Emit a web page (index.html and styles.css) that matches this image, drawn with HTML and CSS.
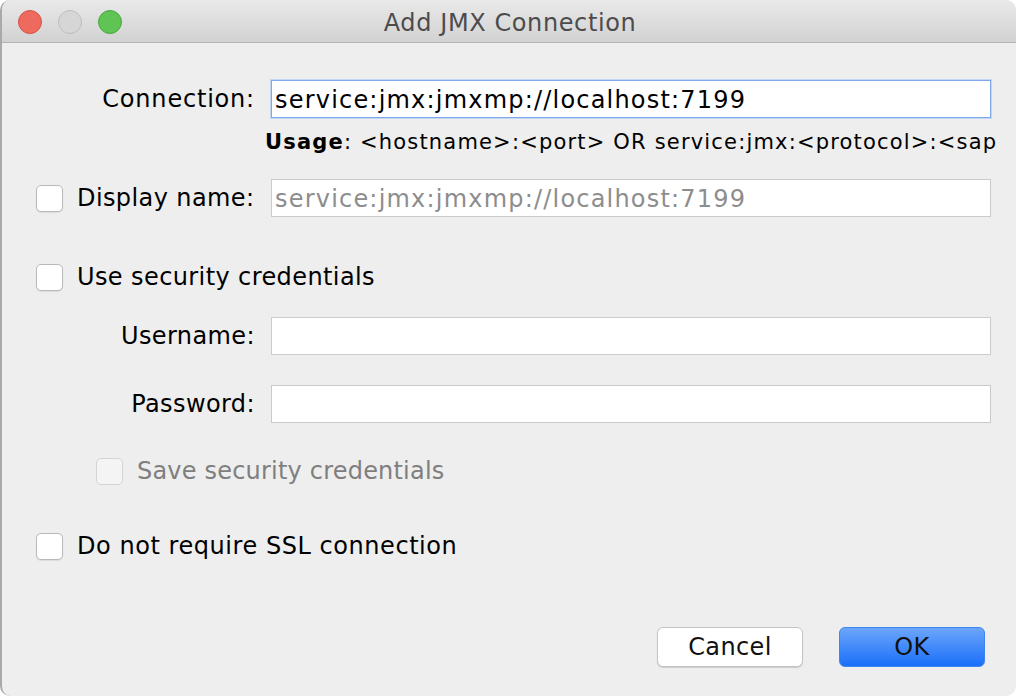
FILE: index.html
```
<!DOCTYPE html>
<html>
<head>
<meta charset="utf-8">
<link rel="stylesheet" href="styles.css">
</head>
<body>
<div class="window">
  <div class="titlebar">
    <div class="lights">
      <span class="light red"></span>
      <span class="light gray"></span>
      <span class="light green"></span>
    </div>
    <div class="title">Add JMX Connection</div>
  </div>
  <div class="content">
    <div class="row row-conn">
      <div class="label wide">Connection:</div>
      <div class="field focus">service:jmx:jmxmp://localhost:7199</div>
    </div>
    <div class="usage"><b>Usage</b>: &lt;hostname&gt;:&lt;port&gt; OR service:jmx:&lt;protocol&gt;:&lt;sap</div>
    <div class="row row-display">
      <div class="check-label"><span class="box"></span><span>Display name:</span></div>
      <div class="field placeholder">service:jmx:jmxmp://localhost:7199</div>
    </div>
    <div class="check-line row-sec"><span class="box"></span><span>Use security credentials</span></div>
    <div class="row row-user">
      <div class="label">Username:</div>
      <div class="field"></div>
    </div>
    <div class="row row-pass">
      <div class="label">Password:</div>
      <div class="field"></div>
    </div>
    <div class="check-line row-save disabled"><span class="box"></span><span class="save-text">Save security credentials</span></div>
    <div class="check-line row-ssl"><span class="box"></span><span class="ssl-text">Do not require SSL connection</span></div>
    <div class="buttons">
      <button class="btn cancel">Cancel</button>
      <button class="btn ok">OK</button>
    </div>
  </div>
</div>
</body>
</html>
```
FILE: styles.css
```
html, body {
  margin: 0;
  padding: 0;
  background: #ffffff;
}
body {
  width: 1018px;
  height: 698px;
  overflow: hidden;
  font-family: "DejaVu Sans", "Liberation Sans", sans-serif;
  color: #000;
}
.window {
  width: 1014px;
  height: 696px;
  background: #eeeeee;
  border-left: 2px solid #a9a9a9;
  border-radius: 10px;
  overflow: hidden;
  position: relative;
}
.titlebar {
  height: 43px;
  background: linear-gradient(#e9e9e9, #d2d2d2);
  border-bottom: 1px solid #b3b3b3;
  box-sizing: border-box;
  display: flex;
  align-items: center;
  justify-content: center;
  position: relative;
}
.lights {
  position: absolute;
  left: 16px;
  top: 10px;
  display: flex;
  gap: 16px;
}
.light {
  width: 22px;
  height: 22px;
  border-radius: 50%;
  display: block;
}
.red { background: #ee6a5f; border: 1px solid #d35347; }
.gray { background: #d6d6d6; border: 1px solid #bdbdbd; }
.green { background: #5fc454; border: 1px solid #4aa83e; }
.title {
  font-size: 24px;
  color: #4c4c4c;
  letter-spacing: 0.6px;
  padding-left: 2px;
  padding-top: 3px;
}
.content {
  display: flex;
  flex-direction: column;
  font-size: 24px;
  letter-spacing: 0.4px;
}
.row {
  display: flex;
  align-items: center;
}
.label {
  width: 253px;
  text-align: right;
  flex: none;
}
.label.wide { letter-spacing: 0.8px; }
.check-label {
  width: 253px;
  flex: none;
  display: flex;
  align-items: center;
  padding-left: 34px;
  box-sizing: border-box;
}
.field {
  margin-left: 16px;
  width: 720px;
  height: 38px;
  box-sizing: border-box;
  background: #fff;
  border: 1px solid #cbcbcb;
  padding-left: 3px;
  padding-top: 1px;
  line-height: 36px;
  white-space: nowrap;
  overflow: hidden;
  letter-spacing: 1.2px;
}
.field.focus {
  border: 1px solid #7fa8e6;
  box-shadow: 0 0 0 1px #c3d7f5;
}
.placeholder { color: #8d8d8d; }
.row-conn { margin-top: 37px; }
.usage {
  margin-left: 263px;
  margin-top: 9px;
  font-size: 21px;
  letter-spacing: 1.18px;
  white-space: nowrap;
  width: 734px;
  overflow: hidden;
  height: 30px;
  line-height: 30px;
}
.row-display { margin-top: 22px; }
.box {
  width: 25px;
  height: 25px;
  background: #fff;
  border: 1px solid #b9b9b9;
  border-radius: 5px;
  box-shadow: 0 1px 1px rgba(0,0,0,0.08);
  margin-right: 14px;
  flex: none;
}
.check-line {
  display: flex;
  align-items: center;
  padding-left: 34px;
  height: 38px;
}
.row-sec { margin-top: 41px; }
.row-user { margin-top: 21px; }
.row-pass { margin-top: 30px; }
.row-save { margin-top: 29px; padding-left: 94px; }
.save-text { letter-spacing: 0.2px; }
.ssl-text { letter-spacing: 0.55px; }
.disabled { color: #7f7f7f; }
.disabled .box { background: #f4f4f4; border-color: #d4d4d4; box-shadow: none; }
.row-ssl { margin-top: 37px; }
.buttons {
  display: flex;
  justify-content: flex-end;
  gap: 36px;
  padding-right: 31px;
  margin-top: 62px;
}
.btn {
  width: 146px;
  height: 40px;
  font-family: "DejaVu Sans", "Liberation Sans", sans-serif;
  font-size: 24px;
  letter-spacing: 0.4px;
  color: #111;
  border-radius: 6px;
  padding: 0;
}
.cancel {
  background: #fff;
  border: 1px solid #c4c4c4;
  box-shadow: 0 1px 1px rgba(0,0,0,0.15);
}
.ok {
  background: linear-gradient(#6ca6fb, #1a6ff9);
  border: 1px solid #3d85f4;
}
```
